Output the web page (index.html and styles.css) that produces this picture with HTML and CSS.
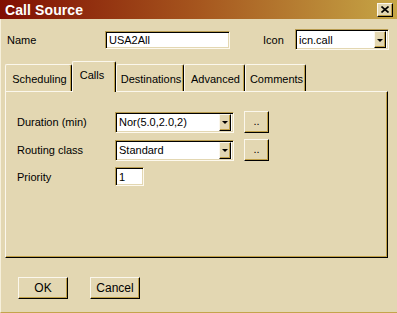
FILE: index.html
```html
<!DOCTYPE html>
<html lang="en">
<head>
    <meta charset="UTF-8">
    <title>Call Source</title>
    <link rel="stylesheet" href="styles.css">
</head>
<body>
    <div class="window">
        <div class="titlebar">
            <span class="title">Call Source</span>
            <span class="close-btn">
                <svg width="8" height="7" viewBox="0 0 8 7"><path d="M0.5 0.5 L7.5 6.5 M7.5 0.5 L0.5 6.5" stroke="#000" stroke-width="1.6"/></svg>
            </span>
        </div>

        <div class="header-row">
            <span class="lbl lbl-name">Name</span>
            <div class="field name-field">USA2All</div>
            <span class="lbl lbl-icon">Icon</span>
            <div class="field combo icon-combo">
                <span class="combo-text">icn.call</span>
                <span class="drop-btn"><span class="arrow"></span></span>
            </div>
        </div>

        <div class="tabs">
            <span class="tab tab-sched">Scheduling</span>
            <span class="tab tab-calls active">Calls</span>
            <span class="tab tab-dest">Destinations</span>
            <span class="tab tab-adv">Advanced</span>
            <span class="tab tab-comm">Comments</span>
        </div>

        <div class="panel">
            <div class="form-grid">
                <span class="lbl">Duration (min)</span>
                <div class="field combo wide-combo">
                    <span class="combo-text">Nor(5.0,2.0,2)</span>
                    <span class="drop-btn"><span class="arrow"></span></span>
                </div>
                <span class="btn dots-btn">..</span>

                <span class="lbl">Routing class</span>
                <div class="field combo wide-combo">
                    <span class="combo-text">Standard</span>
                    <span class="drop-btn"><span class="arrow"></span></span>
                </div>
                <span class="btn dots-btn">..</span>

                <span class="lbl">Priority</span>
                <div class="field priority-field">1</div>
            </div>
        </div>

        <div class="buttons">
            <span class="btn dlg-btn">OK</span>
            <span class="btn dlg-btn cancel">Cancel</span>
        </div>
    </div>
</body>
</html>
```

FILE: styles.css
```css
body {
    margin: 0;
    padding: 0;
    background: #e3d7b2;
    font-family: 'Liberation Sans', Arial, sans-serif;
    font-size: 11px;
    color: #000;
}
.window {
    width: 397px;
    height: 313px;
    box-sizing: border-box;
    background: #e3d7b2;
    border-left: 1px solid #f6f0dc;
    border-bottom: 1px solid #c4a44c;
    display: flex;
    flex-direction: column;
}
.titlebar {
    height: 19px;
    display: flex;
    align-items: center;
    justify-content: space-between;
    background: linear-gradient(to right, #800e02, #a6561e 50%, #c6a646);
    padding: 0 4px 0 5px;
    margin-left: -1px;
}
.title {
    color: #fff;
    font-weight: bold;
    font-size: 14px;
    letter-spacing: 0.1px;
}
.close-btn {
    width: 16px;
    height: 14px;
    box-sizing: border-box;
    background: #e3d7b2;
    border: 1px solid;
    border-color: #fbf7ec #000 #000 #fbf7ec;
    box-shadow: inset -1px -1px 0 #c0a048;
    display: flex;
    align-items: center;
    justify-content: center;
}

/* ust satir */
.header-row {
    display: flex;
    align-items: center;
    height: 21px;
    margin-top: 10px;
}
.lbl-name {
    width: 104px;
    padding-left: 6px;
    box-sizing: border-box;
}
.lbl-icon {
    width: 32px;
    margin-left: 33px;
}
.field {
    box-sizing: border-box;
    background: #fff;
    border: 1px solid;
    border-color: #b89c50 #fdf9ee #fdf9ee #b89c50;
    box-shadow: inset 1px 1px 0 #000, inset -1px -1px 0 #e3d7b2;
    padding: 0 0 0 3px;
    display: flex;
    align-items: center;
}
.name-field {
    width: 125px;
    height: 18px;
}
.combo {
    justify-content: space-between;
    padding-right: 2px;
}
.icon-combo {
    width: 94px;
    height: 21px;
}
.drop-btn {
    width: 12px;
    height: 17px;
    box-sizing: border-box;
    background: #e3d7b2;
    border: 1px solid;
    border-color: #fbf7ec #000 #000 #fbf7ec;
    box-shadow: inset -1px -1px 0 #c0a048;
    display: flex;
    align-items: center;
    justify-content: center;
}
.arrow {
    width: 0;
    height: 0;
    border-left: 3px solid transparent;
    border-right: 3px solid transparent;
    border-top: 3px solid #000;
    margin-top: 1px;
}

/* sekmeler */
.tabs {
    display: flex;
    align-items: flex-end;
    height: 30px;
    margin-top: 11px;
    padding-left: 4px;
}
.tab {
    height: 27px;
    box-sizing: border-box;
    display: flex;
    align-items: center;
    justify-content: center;
    padding: 2px 0 0 2px;
    border-top: 1px solid #fbf7ec;
    border-left: 1px solid #fbf7ec;
    border-right: 1px solid #000;
    border-radius: 2px 2px 0 0;
    box-shadow: inset -1px 0 0 #c0a048;
}
.tab-sched { width: 67px; }
.tab-calls { width: 44px; }
.tab-dest { width: 68px; }
.tab-adv { width: 61px; }
.tab-comm { width: 61px; }
.tab.active {
    height: 31px;
    margin-bottom: -1px;
    padding: 0 4px 4px 0;
    background: #e3d7b2;
    position: relative;
    z-index: 1;
}
.panel {
    width: 383px;
    height: 167px;
    box-sizing: border-box;
    margin-left: 4px;
    border: 1px solid;
    border-color: #fbf7ec #000 #000 #fbf7ec;
    box-shadow: inset -1px -1px 0 #c0a048;
    padding: 19px 0 0 11px;
}
.form-grid {
    display: grid;
    grid-template-columns: 88px 119px 25px;
    column-gap: 10px;
    row-gap: 6px;
    align-items: center;
}
.wide-combo {
    height: 21px;
}
.priority-field {
    width: 29px;
    height: 19px;
}
.btn {
    box-sizing: border-box;
    background: #e3d7b2;
    border: 1px solid;
    border-color: #fbf7ec #000 #000 #fbf7ec;
    box-shadow: inset -1px -1px 0 #c0a048;
    display: flex;
    align-items: center;
    justify-content: center;
}
.dots-btn {
    width: 25px;
    height: 22px;
    padding-bottom: 2px;
}

/* alt butonlar */
.buttons {
    display: flex;
    margin-top: 19px;
    padding-left: 17px;
}
.dlg-btn {
    width: 50px;
    height: 22px;
    font-size: 12px;
}
.cancel {
    margin-left: 22px;
}
```
